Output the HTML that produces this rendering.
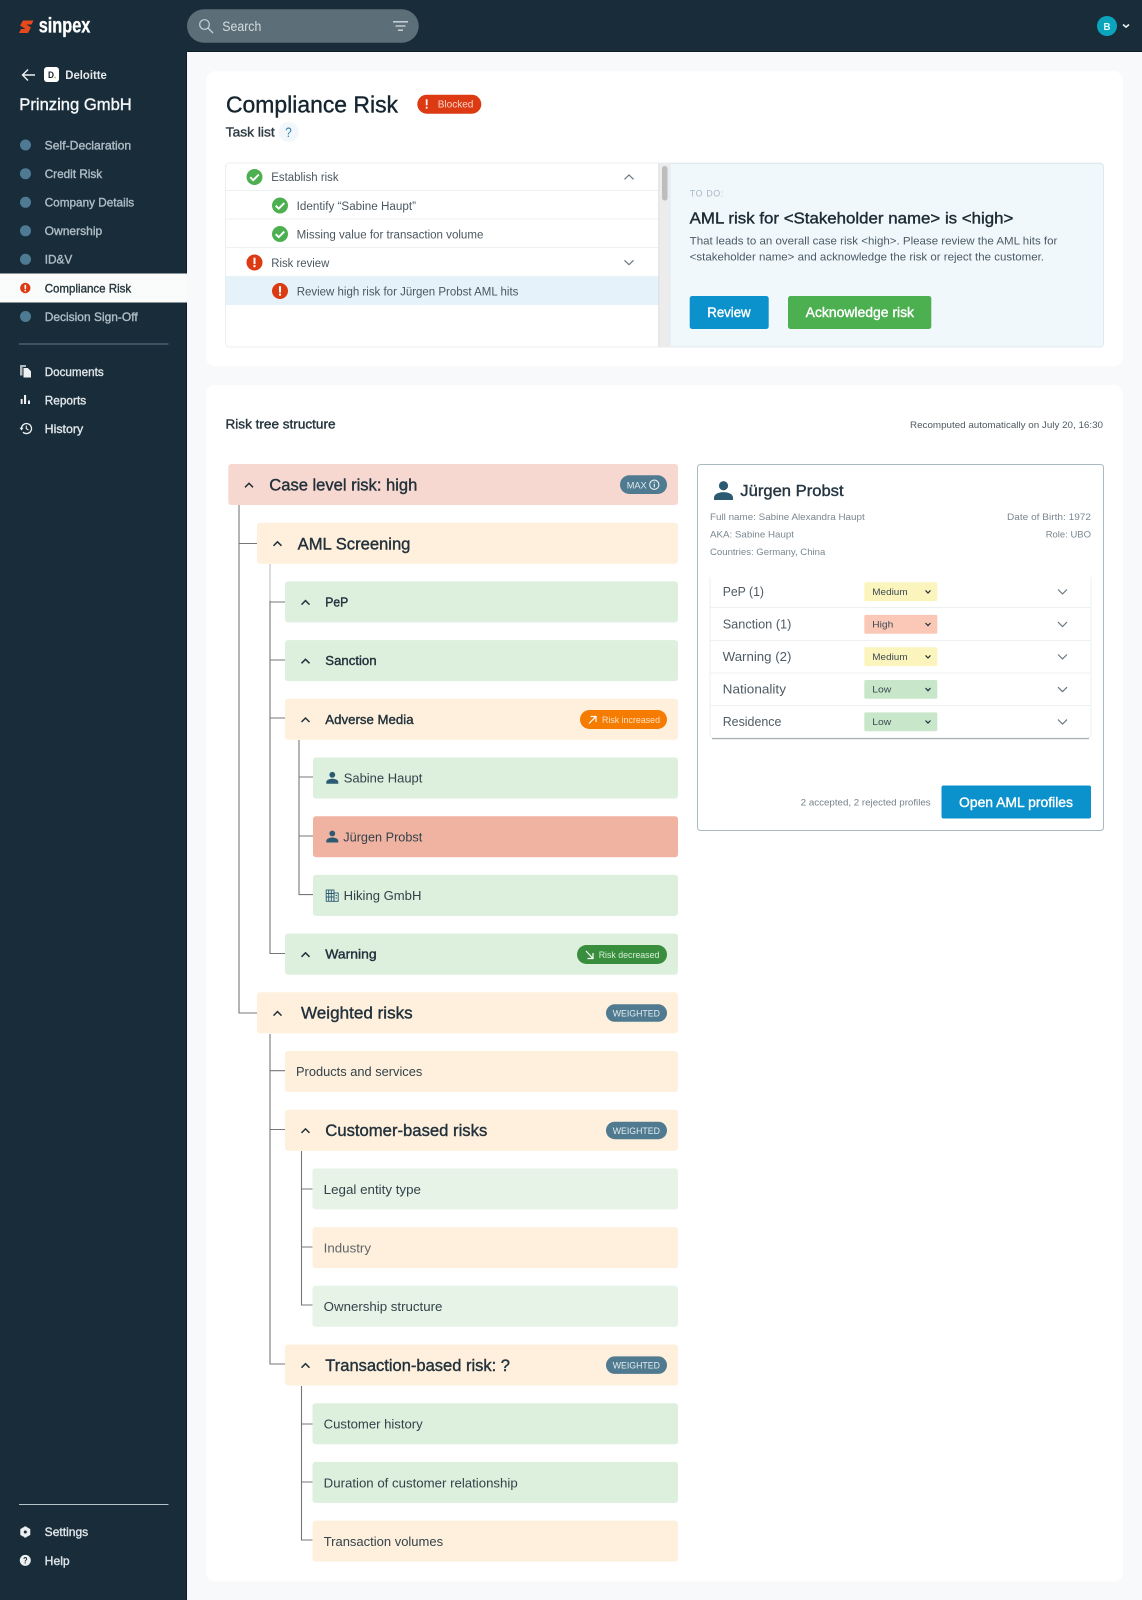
<!DOCTYPE html>
<html lang="en"><head><meta charset="utf-8"><title>Compliance Risk</title>
<style>
html,body{margin:0;padding:0;background:#f7f9fa}
svg{display:block}
text{font-family:"Liberation Sans",Arial,sans-serif}
.s{stroke-width:.38}
.b{font-weight:700}
</style></head><body>
<svg width="1142" height="1600" viewBox="0 0 1142 1600" xmlns="http://www.w3.org/2000/svg">
<defs>
<path id="chu" d="M-4.500 2.300 0-2 4.500 2.300" fill="none" stroke="#6a7780" stroke-width="1.200"/>
<path id="chd" d="M-4.500-2.200 0 2.200 4.500-2.200" fill="none" stroke="#6a7780" stroke-width="1.200"/>
<path id="tch" d="M-4 2.300 0-1.700 4 2.300" fill="none" stroke="#22313b" stroke-width="1.500"/>
<g id="ok"><circle r="8" fill="#4caf50"/><path d="M-4.300.2-1.300 3.200 4.300-2.400" fill="none" stroke="#fff" stroke-width="1.900"/></g>
<g id="bad"><circle r="8" fill="#dc3a12"/><rect x="-1" y="-4.800" width="2" height="6.400" fill="#fff"/><rect x="-1" y="2.600" width="2" height="2.100" fill="#fff"/></g>
<g id="per"><circle cy="-3" r="2.900" fill="#2c5a73"/><path d="M-6 6v-1.500C-6 2-2.500 1 0 1s6 1 6 3.500V6z" fill="#2c5a73"/></g>
<path id="sc" d="M-2.500-1.300 0 1.300 2.500-1.300" fill="none" stroke="#22313b" stroke-width="1.200"/>
</defs>

<rect width="1142" height="1600" fill="#f7f9fa"/>
<!-- sidebar/topbar -->
<rect width="187" height="1600" fill="#182c39"/>
<rect width="1142" height="52" fill="#182c39"/>
<rect x="186" y="52" width="1" height="1548" fill="#0e1c25"/>
<rect x="187" y="51" width="955" height="1" fill="#0e1c25"/>

<!-- logo -->
<path d="M23 20.500h10.500l-2 4h-5l4.500 3-3 5.500H19l2-4h4.500l-5.500-3.500z" fill="#e8481c"/>
<text x="38.700" y="32.500" font-size="21" class="b" fill="#fff" stroke="#fff" stroke-width=".3" textLength="51.700" lengthAdjust="spacingAndGlyphs">sinpex</text>

<!-- search -->
<rect x="187" y="9.300" width="231.700" height="33.400" rx="16.700" fill="#5c6f78"/>
<circle cx="204.500" cy="24.500" r="4.800" fill="none" stroke="#c5cfd4" stroke-width="1.200"/>
<path d="M208 28l5 5" stroke="#c5cfd4" stroke-width="1.300"/>
<text x="222.300" y="30.800" font-size="13.500" fill="#d5dcdf" textLength="39" lengthAdjust="spacingAndGlyphs">Search</text>
<path d="M393 21.800h15M395.500 26h10M398 30.200h5" stroke="#d5dcdf" stroke-width="1.300"/>

<!-- avatar -->
<circle cx="1107" cy="26" r="10" fill="#0aa5bd"/>
<text x="1103.500" y="29.800" font-size="10" class="b" fill="#e8fbfe" textLength="7" lengthAdjust="spacingAndGlyphs">B</text>
<path d="M1123 24.500l3 2.600 3-2.600" fill="none" stroke="#eef2f4" stroke-width="1.600"/>

<!-- back row -->
<path d="M35 75H23M28 69.500 22.500 75 28 80.500" fill="none" stroke="#eef2f4" stroke-width="1.400"/>
<rect x="44" y="67" width="15" height="15" rx="3" fill="#fff"/>
<text x="48" y="78.200" font-size="9" class="b" fill="#18262f" textLength="6" lengthAdjust="spacingAndGlyphs">D</text>
<circle cx="55" cy="77.500" r=".8" fill="#7cb800"/>
<text x="65.300" y="79.200" font-size="12" class="b" fill="#e6e9eb" textLength="41.500" lengthAdjust="spacingAndGlyphs">Deloitte</text>
<text x="19.300" y="110" font-size="17" class="s" stroke="#f4f6f7" fill="#f4f6f7" textLength="112.500" lengthAdjust="spacingAndGlyphs">Prinzing GmbH</text>

<!-- nav -->
<g fill="#4f7a93"><circle cx="25.500" cy="145" r="5.500"/><circle cx="25.500" cy="173.700" r="5.500"/><circle cx="25.500" cy="202.300" r="5.500"/><circle cx="25.500" cy="230.800" r="5.500"/><circle cx="25.500" cy="259.300" r="5.500"/><circle cx="25.500" cy="316.500" r="5.500"/></g>
<g font-size="12" fill="#aebcc5" class="s" stroke="#aebcc5">
<text x="44.700" y="149.300" textLength="86.500" lengthAdjust="spacingAndGlyphs">Self-Declaration</text>
<text x="44.700" y="178" textLength="57.500" lengthAdjust="spacingAndGlyphs">Credit Risk</text>
<text x="44.700" y="206.600" textLength="89.500" lengthAdjust="spacingAndGlyphs">Company Details</text>
<text x="44.700" y="235.100" textLength="57.500" lengthAdjust="spacingAndGlyphs">Ownership</text>
<text x="44.700" y="263.600" textLength="27.500" lengthAdjust="spacingAndGlyphs">ID&amp;V</text>
<text x="44.700" y="320.800" textLength="93" lengthAdjust="spacingAndGlyphs">Decision Sign-Off</text>
</g>
<rect y="273.500" width="187" height="29" fill="#fafbfb"/>
<circle cx="25.300" cy="288" r="5.200" fill="#dc3a12"/><rect x="24.500" y="284.800" width="1.600" height="4.100" fill="#fff"/><rect x="24.500" y="289.800" width="1.600" height="1.500" fill="#fff"/>
<text x="44.700" y="292.300" font-size="12" fill="#27373f" class="s" stroke="#27373f" textLength="86.500" lengthAdjust="spacingAndGlyphs">Compliance Risk</text>

<rect x="19" y="343.500" width="149.500" height="1" fill="#5f7c8c"/>
<!-- docs -->
<path d="M20 365h6v2h-3.500v8.500H20z" fill="#aeb9bf"/>
<path d="M23.500 368h4.300l3.200 3.200v6.300h-7.500z" fill="#eef1f2"/>
<path d="M20.700 399h1.900v5h-1.900zM24 395h2.100v9H24zM28 400.500h2v3.500h-2z" fill="#eef1f2"/>
<path d="M21.500 428.500a5 5 0 1 1 1.500 3.600" fill="none" stroke="#eef1f2" stroke-width="1.300"/><path d="M19.500 427.800h4l-2 2.700z" fill="#eef1f2"/><path d="M26.300 425.600v3.100l2.200 1.300" fill="none" stroke="#eef1f2" stroke-width="1.100"/>
<g font-size="12" fill="#dfe5e8" class="s" stroke="#dfe5e8">
<text x="44.700" y="376" textLength="59" lengthAdjust="spacingAndGlyphs">Documents</text>
<text x="44.700" y="404.700" textLength="41.500" lengthAdjust="spacingAndGlyphs">Reports</text>
<text x="44.700" y="433.200" textLength="38.500" lengthAdjust="spacingAndGlyphs">History</text>
<text x="44.700" y="1536.200" textLength="43.500" lengthAdjust="spacingAndGlyphs">Settings</text>
<text x="44.700" y="1564.800" textLength="25" lengthAdjust="spacingAndGlyphs">Help</text>
</g>
<rect x="19" y="1504" width="149.500" height="1" fill="#b4c2ca"/>
<!-- settings -->
<circle cx="25.300" cy="1532" r="3.800" fill="none" stroke="#eef1f2" stroke-width="2.600"/>
<path d="M25.300 1526.400v11.200M20.500 1529.200l9.600 5.600M20.500 1534.800l9.600-5.600" stroke="#eef1f2" stroke-width="2"/>
<circle cx="25.300" cy="1532" r="1.500" fill="#182c39"/>
<circle cx="25.300" cy="1560.400" r="5.500" fill="#eef1f2"/>
<text x="23.100" y="1563.700" font-size="9" class="b" fill="#182c39" textLength="4.400" lengthAdjust="spacingAndGlyphs">?</text>

<!-- cards -->
<rect x="206" y="71.300" width="917" height="295" rx="9" fill="#fff"/>
<rect x="206" y="385" width="917" height="1196.500" rx="9" fill="#fff"/>

<text x="226" y="112.500" font-size="23.500" fill="#15252f" class="s" stroke="#15252f" textLength="172" lengthAdjust="spacingAndGlyphs">Compliance Risk</text>
<rect x="417.300" y="94.700" width="64" height="19" rx="9.500" fill="#dc3a12"/>
<rect x="425.800" y="99.300" width="1.700" height="6" fill="#fff"/><rect x="425.800" y="106.800" width="1.700" height="1.800" fill="#fff"/>
<text x="437.700" y="107.700" font-size="10.500" fill="#fbd6cb" textLength="35.700" lengthAdjust="spacingAndGlyphs">Blocked</text>
<text x="225.700" y="136.700" font-size="13" class="s" stroke="#2d3b44" fill="#2d3b44" textLength="49" lengthAdjust="spacingAndGlyphs">Task list</text>
<circle cx="288.700" cy="132" r="10" fill="#f1f7fb"/>
<text x="285.300" y="137" font-size="13.500" fill="#2f7fb0" textLength="6.500" lengthAdjust="spacingAndGlyphs">?</text>

<!-- task box -->
<rect x="225.500" y="163" width="878" height="184" rx="4" fill="#fff" stroke="#eaeef0"/>
<rect x="226" y="276" width="433" height="29" fill="#e5f2f9"/>
<path d="M226 190.500h433M226 219h433M226 247.500h433" stroke="#eef1f2"/>
<path d="M670 163.500h430a3.500 3.500 0 0 1 3.500 3.500v176.500a3.500 3.500 0 0 1-3.500 3.500H670z" fill="#f0f8fc" stroke="#e0e9ee"/>
<rect x="659" y="163.500" width="11" height="183.500" fill="#ececec"/>
<rect x="658.300" y="163.500" width="1" height="183.500" fill="#dcdcdc"/>
<rect x="662" y="166" width="5.500" height="34.500" rx="2.700" fill="#bdbdbd"/>
<use href="#ok" x="254.500" y="177"/><use href="#ok" x="280" y="205.500"/><use href="#ok" x="280" y="234"/>
<use href="#bad" x="254.500" y="262.500"/><use href="#bad" x="280" y="291"/>
<g font-size="11.500" fill="#4a5760">
<text x="271.300" y="181.200" textLength="67.300" lengthAdjust="spacingAndGlyphs">Establish risk</text>
<text x="296.700" y="210" textLength="119.300" lengthAdjust="spacingAndGlyphs">Identify “Sabine Haupt”</text>
<text x="296.700" y="238.500" textLength="186.700" lengthAdjust="spacingAndGlyphs">Missing value for transaction volume</text>
<text x="271.300" y="266.800" textLength="58" lengthAdjust="spacingAndGlyphs">Risk review</text>
<text x="296.700" y="295.300" textLength="221.700" lengthAdjust="spacingAndGlyphs">Review high risk for Jürgen Probst AML hits</text>
</g>
<use href="#chu" x="629" y="177"/><use href="#chd" x="629" y="262.500"/>

<text x="689.700" y="196.300" font-size="9" fill="#a8b8c2" textLength="33.700" lengthAdjust="spacing">TO DO:</text>
<text x="689.700" y="223.700" font-size="15.500" fill="#1c2a33" class="s" stroke="#1c2a33" textLength="323.700" lengthAdjust="spacingAndGlyphs">AML risk for &lt;Stakeholder name&gt; is &lt;high&gt;</text>
<g font-size="11" fill="#4c5a63">
<text x="689.700" y="244.500" textLength="367.700" lengthAdjust="spacingAndGlyphs">That leads to an overall case risk &lt;high&gt;. Please review the AML hits for</text>
<text x="689.700" y="260.300" textLength="354.300" lengthAdjust="spacingAndGlyphs">&lt;stakeholder name&gt; and acknowledge the risk or reject the customer.</text>
</g>
<rect x="689.700" y="296" width="79" height="33" rx="2.500" fill="#0b91cb"/>
<text x="707.300" y="317.200" font-size="13.500" fill="#fff" class="s" stroke="#fff" textLength="43.300" lengthAdjust="spacingAndGlyphs">Review</text>
<rect x="788" y="296" width="143.300" height="33" rx="2.500" fill="#4caf50"/>
<text x="805.700" y="317.200" font-size="13.500" fill="#fff" class="s" stroke="#fff" textLength="108.300" lengthAdjust="spacingAndGlyphs">Acknowledge risk</text>

<text x="225.500" y="428.500" font-size="12.500" class="s" stroke="#25343d" fill="#25343d" textLength="110" lengthAdjust="spacingAndGlyphs">Risk tree structure</text>
<text x="910" y="427.800" font-size="9.500" fill="#4d5a62" textLength="193" lengthAdjust="spacingAndGlyphs">Recomputed automatically on July 20, 16:30</text>

<!-- tree lines -->
<g stroke="#777" stroke-width="1.100" fill="none">
<path d="M239 505V1013H257M239 543.500H257"/>
<path d="M270 600V953.500H285M270 602H285M270 660H285M270 718H285"/>
<path d="M299 740V894.600H313M299 777H313M299 836H313"/>
<path d="M270 1034V1364H285M270 1070.700H285M270 1129.500H285"/>
<path d="M301.500 1151V1305H312.500M301.500 1189H312.500M301.500 1247H312.500"/>
<path d="M301.500 1386V1540H312.500M301.500 1424H312.500M301.500 1482H312.500"/>
</g>
<path d="M270 564v37" stroke="#bdbdbd" stroke-width="1.100"/>

<!-- tree rows -->
<rect x="228.300" y="464" width="449.700" height="41" rx="3" fill="#f7d8d0"/>
<rect x="257" y="522.700" width="421" height="41" rx="3" fill="#fef0dc"/>
<rect x="285" y="581.400" width="393" height="41" rx="3" fill="#ddefdd"/>
<rect x="285" y="640.100" width="393" height="41" rx="3" fill="#ddefdd"/>
<rect x="285" y="698.800" width="393" height="41" rx="3" fill="#fef0dc"/>
<rect x="313" y="757.500" width="365" height="41" rx="3" fill="#ddefdd"/>
<rect x="313" y="816.200" width="365" height="41" rx="3" fill="#f1b3a1"/>
<rect x="313" y="874.900" width="365" height="41" rx="3" fill="#ddefdd"/>
<rect x="285" y="933.600" width="393" height="41" rx="3" fill="#ddefdd"/>
<rect x="257" y="992.300" width="421" height="41" rx="3" fill="#fef0dc"/>
<rect x="285" y="1051" width="393" height="41" rx="3" fill="#fef0dc"/>
<rect x="285" y="1109.700" width="393" height="41" rx="3" fill="#fef0dc"/>
<rect x="312.500" y="1168.400" width="365.500" height="41" rx="3" fill="#e6f3e6"/>
<rect x="312.500" y="1227.100" width="365.500" height="41" rx="3" fill="#fef0dc"/>
<rect x="312.500" y="1285.800" width="365.500" height="41" rx="3" fill="#e6f3e6"/>
<rect x="285" y="1344.500" width="393" height="41" rx="3" fill="#fef0dc"/>
<rect x="312.500" y="1403.200" width="365.500" height="41" rx="3" fill="#ddefdd"/>
<rect x="312.500" y="1461.900" width="365.500" height="41" rx="3" fill="#ddefdd"/>
<rect x="312.500" y="1520.600" width="365.500" height="41" rx="3" fill="#fef0dc"/>

<use href="#tch" x="249" y="485"/><use href="#tch" x="277.500" y="543.500"/>
<use href="#tch" x="305.500" y="602.300"/><use href="#tch" x="305.500" y="661"/><use href="#tch" x="305.500" y="719.700"/>
<use href="#tch" x="305.500" y="954.500"/><use href="#tch" x="277.500" y="1013.300"/><use href="#tch" x="305.500" y="1130.600"/><use href="#tch" x="305.500" y="1365.400"/>

<g fill="#22313b">
<g font-size="16.500" class="s" stroke="#22313b">
<text x="269.300" y="490.700" textLength="148" lengthAdjust="spacingAndGlyphs">Case level risk: high</text>
<text x="297.700" y="549.500" textLength="112.700" lengthAdjust="spacingAndGlyphs">AML Screening</text>
<text x="301" y="1018.700" textLength="111.700" lengthAdjust="spacingAndGlyphs">Weighted risks</text>
<text x="325.300" y="1136" textLength="162" lengthAdjust="spacingAndGlyphs">Customer-based risks</text>
<text x="325.300" y="1370.800" textLength="184.700" lengthAdjust="spacingAndGlyphs">Transaction-based risk: ?</text>
</g>
<g font-size="13" class="s" stroke="#22313b">
<text x="325.300" y="606.500" textLength="23" lengthAdjust="spacingAndGlyphs">PeP</text>
<text x="325.300" y="665.200" textLength="51.300" lengthAdjust="spacingAndGlyphs">Sanction</text>
<text x="325.300" y="723.800" textLength="88.300" lengthAdjust="spacingAndGlyphs">Adverse Media</text>
<text x="325.300" y="958.700" textLength="51.300" lengthAdjust="spacingAndGlyphs">Warning</text>
</g>
<g font-size="13" fill="#33424b">
<text x="343.700" y="782.500" textLength="78.700" lengthAdjust="spacingAndGlyphs">Sabine Haupt</text>
<text x="343.300" y="841.300" textLength="79" lengthAdjust="spacingAndGlyphs">Jürgen Probst</text>
<text x="343.700" y="899.800" textLength="77.700" lengthAdjust="spacingAndGlyphs">Hiking GmbH</text>
<text x="296" y="1076.200" textLength="126.300" lengthAdjust="spacingAndGlyphs">Products and services</text>
<text x="323.700" y="1193.800" textLength="97.300" lengthAdjust="spacingAndGlyphs">Legal entity type</text>
<text x="323.700" y="1252.500" fill="#5f666b" textLength="47.300" lengthAdjust="spacingAndGlyphs">Industry</text>
<text x="323.700" y="1311.200" textLength="118.700" lengthAdjust="spacingAndGlyphs">Ownership structure</text>
<text x="323.700" y="1428.600" textLength="99" lengthAdjust="spacingAndGlyphs">Customer history</text>
<text x="323.700" y="1487.300" textLength="194" lengthAdjust="spacingAndGlyphs">Duration of customer relationship</text>
<text x="323.700" y="1546" textLength="119.400" lengthAdjust="spacingAndGlyphs">Transaction volumes</text>
</g>
</g>
<use href="#per" x="332.300" y="777.800"/><use href="#per" x="332.300" y="836.500"/>
<g fill="none" stroke="#2c5a73" stroke-width=".9"><rect x="326.200" y="890" width="7.800" height="11.300"/><rect x="334" y="893" width="4.200" height="8.300"/><path d="M328.700 890v11M331.300 890v11M326 893.500h8M326 897h8M335.500 895.500h1.500M335.500 898h1.500"/></g>

<!-- badges -->
<rect x="620" y="475.300" width="47" height="18.700" rx="9.300" fill="#4f7a90"/>
<text x="626.700" y="488.500" font-size="9.500" fill="#dfe9ee" textLength="20" lengthAdjust="spacingAndGlyphs">MAX</text>
<circle cx="654.300" cy="484.700" r="4.600" fill="none" stroke="#e9f0f3" stroke-width="1.100"/><path d="M654.300 483.700v3.500M654.300 481.700v1" stroke="#e9f0f3" stroke-width="1.100"/>
<rect x="580" y="710" width="87" height="19" rx="9.500" fill="#f57c00"/>
<path d="M589 723.500l7-7M590.500 716.500h5.500v5.500" fill="none" stroke="#fff" stroke-width="1.200"/>
<text x="602" y="723" font-size="9.500" fill="#ffe3c7" textLength="58" lengthAdjust="spacingAndGlyphs">Risk increased</text>
<rect x="577" y="945" width="90" height="19" rx="9.500" fill="#388e3c"/>
<path d="M586 951l7 7.500M587.500 958.500h5.500v-5.500" fill="none" stroke="#fff" stroke-width="1.200"/>
<text x="598.700" y="958" font-size="9.500" fill="#d8efd9" textLength="60.700" lengthAdjust="spacingAndGlyphs">Risk decreased</text>
<g fill="#4f7a90"><rect x="606" y="1004.300" width="61" height="17.500" rx="8.700"/><rect x="606" y="1121.700" width="61" height="17.500" rx="8.700"/><rect x="606" y="1356.400" width="61" height="17.500" rx="8.700"/></g>
<g font-size="9.500" fill="#e4edf1">
<text x="612.700" y="1016.500" textLength="47.300" lengthAdjust="spacingAndGlyphs">WEIGHTED</text>
<text x="612.700" y="1133.900" textLength="47.300" lengthAdjust="spacingAndGlyphs">WEIGHTED</text>
<text x="612.700" y="1368.600" textLength="47.300" lengthAdjust="spacingAndGlyphs">WEIGHTED</text>
</g>

<!-- right card -->
<rect x="697.500" y="464.500" width="406" height="366" rx="3" fill="#fff" stroke="#a9b9c2"/>
<g transform="translate(723.500 490.500) scale(1.580)"><use href="#per"/></g>
<text x="740.300" y="495.800" font-size="15.500" fill="#253540" class="s" stroke="#253540" textLength="103.300" lengthAdjust="spacingAndGlyphs">Jürgen Probst</text>
<g font-size="9.500" fill="#7a8790">
<text x="710" y="519.800" textLength="154.700" lengthAdjust="spacingAndGlyphs">Full name: Sabine Alexandra Haupt</text>
<text x="710" y="537.300" textLength="84" lengthAdjust="spacingAndGlyphs">AKA: Sabine Haupt</text>
<text x="710" y="554.800" textLength="115.300" lengthAdjust="spacingAndGlyphs">Countries: Germany, China</text>
<text x="1007" y="519.800" textLength="84" lengthAdjust="spacingAndGlyphs">Date of Birth: 1972</text>
<text x="1045.700" y="537.300" textLength="45.300" lengthAdjust="spacingAndGlyphs">Role: UBO</text>
</g>
<path d="M710 577v157a4 4 0 0 0 4 4h373a4 4 0 0 0 4-4V577" fill="#fff" stroke="#eef1f2"/>
<path d="M712 738.600h377" stroke="#a7b1b6" stroke-width="1.200"/>
<path d="M710 607.500h381M710 640.500h381M710 673h381M710 705.500h381" stroke="#eef1f2"/>
<g font-size="13" fill="#4f5b64">
<text x="722.700" y="596" textLength="41.300" lengthAdjust="spacingAndGlyphs">PeP (1)</text>
<text x="722.700" y="628.500" textLength="68.700" lengthAdjust="spacingAndGlyphs">Sanction (1)</text>
<text x="722.700" y="661" textLength="68.700" lengthAdjust="spacingAndGlyphs">Warning (2)</text>
<text x="722.700" y="693.500" textLength="63.300" lengthAdjust="spacingAndGlyphs">Nationality</text>
<text x="722.700" y="726" textLength="58.700" lengthAdjust="spacingAndGlyphs">Residence</text>
</g>
<rect x="864.300" y="582.300" width="73" height="18.800" rx="1.500" fill="#fbf4bd"/>
<rect x="864.300" y="614.900" width="73" height="18.800" rx="1.500" fill="#fbc8b8"/>
<rect x="864.300" y="647.300" width="73" height="18.800" rx="1.500" fill="#fbf4bd"/>
<rect x="864.300" y="680" width="73" height="18.800" rx="1.500" fill="#c8e6c9"/>
<rect x="864.300" y="712.400" width="73" height="18.800" rx="1.500" fill="#c8e6c9"/>
<g font-size="9.500" fill="#3c4a52">
<text x="872.300" y="595" textLength="35.300" lengthAdjust="spacingAndGlyphs">Medium</text>
<text x="872.300" y="627.600" textLength="21" lengthAdjust="spacingAndGlyphs">High</text>
<text x="872.300" y="660" textLength="35.300" lengthAdjust="spacingAndGlyphs">Medium</text>
<text x="872.300" y="692.700" textLength="19" lengthAdjust="spacingAndGlyphs">Low</text>
<text x="872.300" y="725.100" textLength="19" lengthAdjust="spacingAndGlyphs">Low</text>
</g>
<use href="#sc" x="928" y="591.700"/><use href="#sc" x="928" y="624.300"/><use href="#sc" x="928" y="656.700"/><use href="#sc" x="928" y="689.400"/><use href="#sc" x="928" y="721.800"/>
<use href="#chd" x="1062.500" y="591.700"/><use href="#chd" x="1062.500" y="624.300"/><use href="#chd" x="1062.500" y="656.700"/><use href="#chd" x="1062.500" y="689.400"/><use href="#chd" x="1062.500" y="721.800"/>
<text x="800.700" y="805.500" font-size="9.500" fill="#74818a" textLength="130" lengthAdjust="spacingAndGlyphs">2 accepted, 2 rejected profiles</text>
<rect x="941.500" y="785.500" width="149.500" height="33" rx="2" fill="#0b91cb"/>
<text x="959" y="806.800" font-size="13.500" fill="#fff" class="s" stroke="#fff" textLength="114" lengthAdjust="spacingAndGlyphs">Open AML profiles</text>
</svg>
</body></html>
